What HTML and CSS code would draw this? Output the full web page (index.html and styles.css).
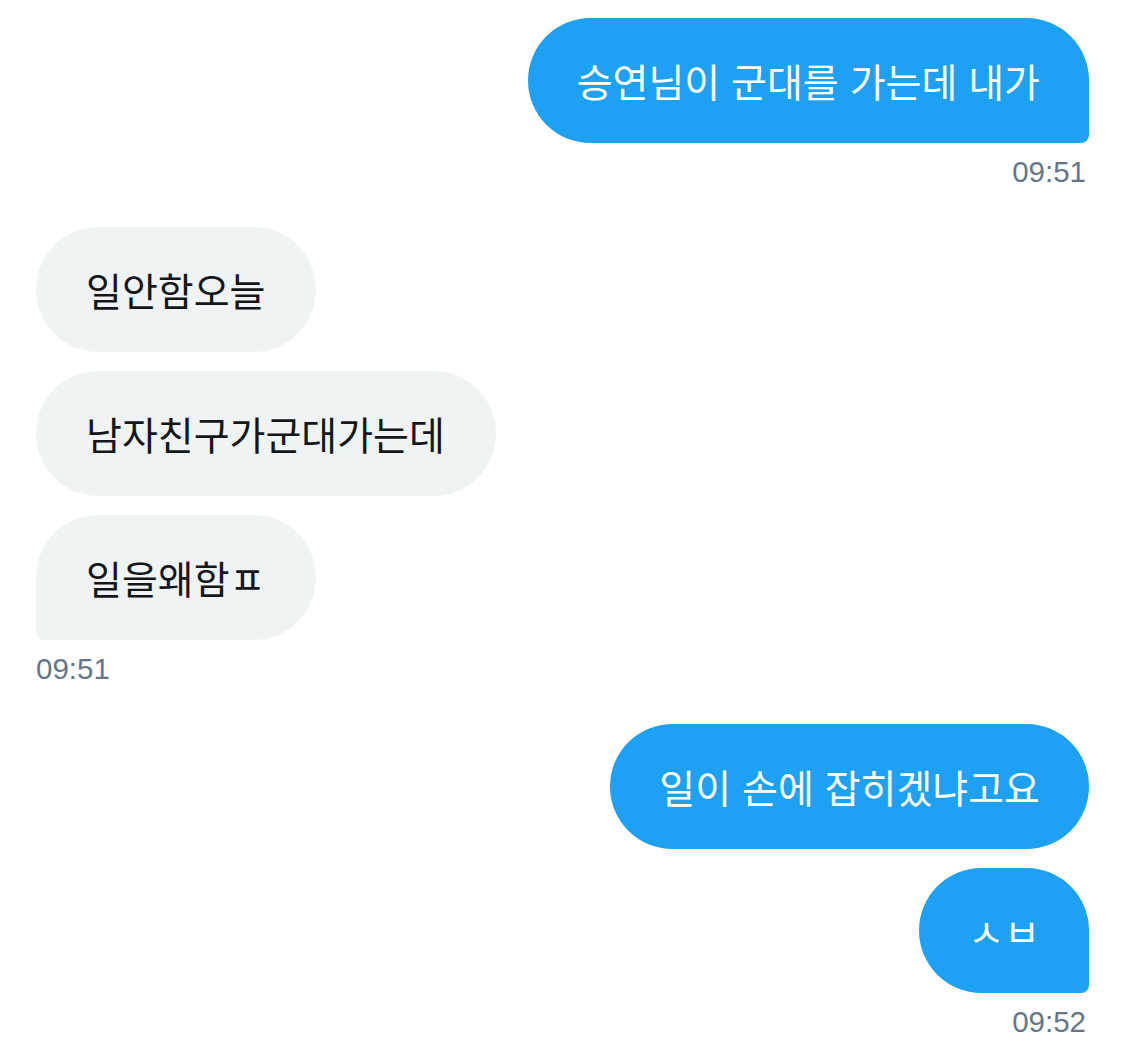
FILE: index.html
```html
<!DOCTYPE html>
<html lang="ko">
<head>
<meta charset="utf-8">
<link rel="stylesheet" href="styles.css">
</head>
<body>
<div class="chat">
  <div class="group sent">
    <div class="bubble tail">승연님이 군대를 가는데 내가</div>
    <div class="time">09:51</div>
  </div>
  <div class="group received">
    <div class="bubble">일안함오늘</div>
    <div class="bubble">남자친구가군대가는데</div>
    <div class="bubble tail">일을왜함ㅍ</div>
    <div class="time">09:51</div>
  </div>
  <div class="group sent">
    <div class="bubble">일이 손에 잡히겠냐고요</div>
    <div class="bubble tail">ㅅㅂ</div>
    <div class="time">09:52</div>
  </div>
</div>
</body>
</html>
```

FILE: styles.css
```css
html, body {
  margin: 0;
  padding: 0;
  background: #ffffff;
}

.chat {
  display: flex;
  flex-direction: column;
  gap: 38px;
  padding: 18px 36px;
}

.group {
  display: flex;
  flex-direction: column;
  gap: 19px;
}

.sent {
  align-items: flex-end;
}

.received {
  align-items: flex-start;
}

.bubble {
  font-family: "Noto Sans CJK KR", "Noto Sans", sans-serif;
  font-size: 39px;
  line-height: 45px;
  padding: 40px 49px;
  border-radius: 63px;
  white-space: nowrap;
}

.received .bubble {
  background: #eff3f4;
  color: #14171a;
  padding: 40px 51px 40px 50px;
}

.sent .bubble {
  background: #1da1f2;
  color: #ffffff;
}

.sent .bubble.tail {
  border-bottom-right-radius: 8px;
}

.received .bubble.tail {
  border-bottom-left-radius: 8px;
}

.time {
  font-family: "Liberation Sans", Arial, sans-serif;
  font-size: 29.5px;
  line-height: 34px;
  color: #657786;
  margin-top: -7px;
  padding: 0 3px 0 0;
}

.received .time {
  padding: 0;
}
```
